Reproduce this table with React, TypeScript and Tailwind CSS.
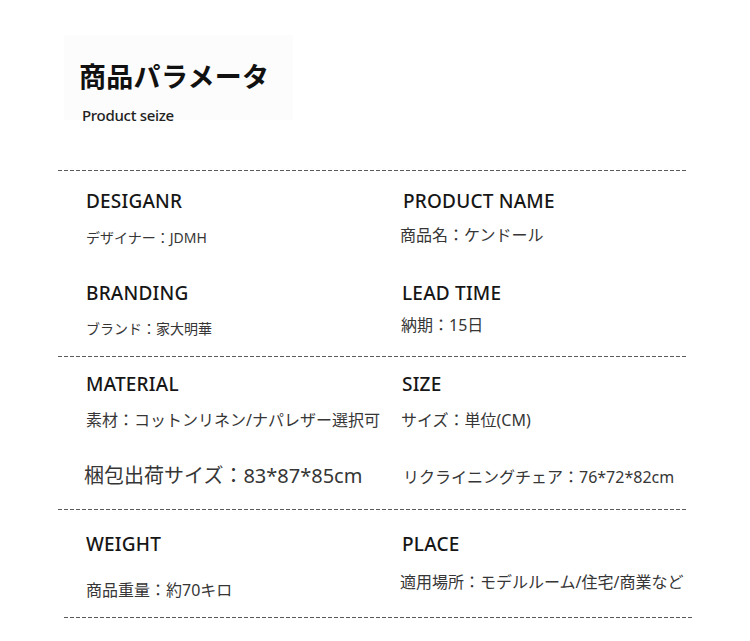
const Dashed = ({ className = "" }: { className?: string }) => (
  <div
    className={`h-px w-[628px] bg-[linear-gradient(to_right,#5a5a5a_0_4px,transparent_4px_6px)] bg-[length:6px_1px] ${className}`}
  />
);

const Head = ({ children, className = "" }: { children: React.ReactNode; className?: string }) => (
  <div className={`text-[19px] leading-[24px] font-medium text-[#161616] tracking-[0.2px] ${className}`}>{children}</div>
);

const App = () => {
  return (
    <div className="w-[750px] h-[641px] bg-white overflow-hidden font-['Noto_Sans','Noto_Sans_CJK_JP',sans-serif]">
      {/* title */}
      <div className="ml-[64px] mt-[35px] w-[229px] h-[85px] bg-[#fcfcfc] pl-[15px] pt-[28px]">
        <div className="text-[27px] leading-[27px] font-bold text-[#111] tracking-[0.3px]">商品パラメータ</div>
        <div className="mt-[18px] pl-[3px] text-[15px] leading-[15px] font-medium tracking-[-0.3px] text-[#222]">Product seize</div>
      </div>

      <div className="ml-[58px] mt-[50px] w-[628px]">
        <Dashed />

        {/* designer / product name / branding / lead time */}
        <div className="pt-[18px] pb-[17px]">
          <div className="grid grid-cols-[342px_1fr] h-[92px]">
            <div className="pl-[28px]">
              <Head>DESIGANR</Head>
              <div className="mt-[15px] text-[14px] leading-[20px] text-[#363636]">デザイナー：JDMH</div>
            </div>
            <div>
              <Head className="pl-[3px]">PRODUCT NAME</Head>
              <div className="mt-[12px] text-[16px] leading-[20px] text-[#363636]">商品名：ケンドール</div>
            </div>
          </div>
          <div className="grid grid-cols-[342px_1fr]">
            <div className="pl-[28px]">
              <Head>BRANDING</Head>
              <div className="mt-[14px] text-[14px] leading-[20px] text-[#363636]">ブランド：家大明華</div>
            </div>
            <div>
              <Head className="pl-[2px]">LEAD TIME</Head>
              <div className="mt-[10px] pl-[1px] text-[16px] leading-[20px] text-[#363636]">納期：15日</div>
            </div>
          </div>
        </div>

        <Dashed />

        {/* material / size */}
        <div className="pt-[15px] pb-[19px] grid grid-cols-[342px_1fr]">
          <div className="pl-[28px]">
            <Head>MATERIAL</Head>
            <div className="mt-[14px] text-[16px] leading-[20px] text-[#363636]">素材：コットンリネン/ナパレザー選択可</div>
            <div className="mt-[32px] -ml-[2px] text-[20px] leading-[28px] text-[#363636]">梱包出荷サイズ：83*87*85cm</div>
          </div>
          <div>
            <Head className="pl-[2px]">SIZE</Head>
            <div className="mt-[14px] pl-[1px] text-[16px] leading-[20px] text-[#363636]">サイズ：単位(CM)</div>
            <div className="mt-[37px] pl-[3px] text-[16px] leading-[20px] text-[#363636]">リクライニングチェア：76*72*82cm</div>
          </div>
        </div>

        <Dashed />

        {/* weight / place */}
        <div className="pt-[22px] pb-[17px] grid grid-cols-[342px_1fr] items-start">
          <div className="pl-[28px]">
            <Head>WEIGHT</Head>
            <div className="mt-[24px] text-[16px] leading-[20px] text-[#363636]">商品重量：約70キロ</div>
          </div>
          <div>
            <Head className="pl-[2px]">PLACE</Head>
            <div className="mt-[16px] text-[16px] leading-[20px] text-[#363636]">適用場所：モデルルーム/住宅/商業など</div>
          </div>
        </div>

        <Dashed className="ml-[6px]" />
      </div>
    </div>
  );
};

export default App;
